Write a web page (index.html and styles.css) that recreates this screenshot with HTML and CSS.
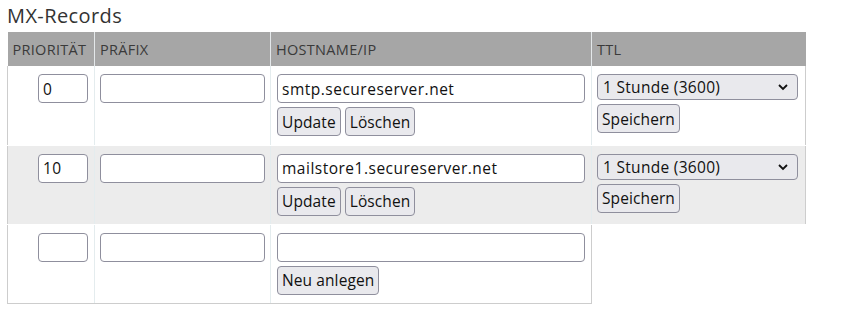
FILE: index.html
```html
<!DOCTYPE html>
<html lang="de">

<head>
  <meta charset="UTF-8" />
  <title>MX-Records</title>
  <link rel="stylesheet" href="styles.css">
</head>

<body>
  <h2 class="title">MX-Records</h2>
  <table class="records">
    <colgroup>
      <col class="col-prio">
      <col class="col-prefix">
      <col class="col-host">
      <col class="col-ttl">
    </colgroup>
    <thead>
      <tr>
        <th>Priorität</th>
        <th>Präfix</th>
        <th>Hostname/IP</th>
        <th class="last">TTL</th>
      </tr>
    </thead>
    <tbody>
      <tr>
        <td class="prio"><input class="field field-prio" type="text" value="0"></td>
        <td><input class="field field-prefix" type="text" value=""></td>
        <td class="host">
          <input class="field field-host" type="text" value="smtp.secureserver.net">
          <div class="actions">
            <button class="btn" type="button">Update</button>
            <button class="btn" type="button">Löschen</button>
          </div>
        </td>
        <td class="last">
          <div class="select">1 Stunde (3600)
            <svg class="chev" width="12" height="8" viewBox="0 0 12 8"><path d="M2 2l4 4 4-4" fill="none" stroke="#111" stroke-width="1.8"/></svg>
          </div>
          <div class="actions">
            <button class="btn" type="button">Speichern</button>
          </div>
        </td>
      </tr>
      <tr class="alt">
        <td class="prio"><input class="field field-prio" type="text" value="10"></td>
        <td><input class="field field-prefix" type="text" value=""></td>
        <td class="host">
          <input class="field field-host" type="text" value="mailstore1.secureserver.net">
          <div class="actions">
            <button class="btn" type="button">Update</button>
            <button class="btn" type="button">Löschen</button>
          </div>
        </td>
        <td class="last">
          <div class="select">1 Stunde (3600)
            <svg class="chev" width="12" height="8" viewBox="0 0 12 8"><path d="M2 2l4 4 4-4" fill="none" stroke="#111" stroke-width="1.8"/></svg>
          </div>
          <div class="actions">
            <button class="btn" type="button">Speichern</button>
          </div>
        </td>
      </tr>
      <tr class="new">
        <td class="prio"><input class="field field-prio" type="text" value=""></td>
        <td><input class="field field-prefix" type="text" value=""></td>
        <td class="host end">
          <input class="field field-host" type="text" value="">
          <div class="actions">
            <button class="btn" type="button">Neu anlegen</button>
          </div>
        </td>
      </tr>
    </tbody>
  </table>
</body>

</html>
```

FILE: styles.css
```css
* {
  box-sizing: border-box;
}

body {
  margin: 0;
  padding: 4px 7px;
  font-family: 'Open Sans', sans-serif;
  color: #222;
  background: #fff;
}

.title {
  margin: 0 0 4px;
  font-size: 20px;
  font-weight: normal;
  letter-spacing: 0.4px;
  color: #333;
  line-height: 24px;
}

table.records {
  border-collapse: collapse;
  table-layout: fixed;
  width: 798px;
}

.col-prio {
  width: 87px;
}

.col-prefix {
  width: 176px;
}

.col-host {
  width: 321px;
}

.col-ttl {
  width: 214px;
}

.records th {
  background: #a6a6a6;
  color: #3a3a3a;
  font-weight: normal;
  font-size: 14.5px;
  letter-spacing: 0.3px;
  text-transform: uppercase;
  text-align: left;
  height: 34px;
  padding: 0 5px;
  border-right: 1px solid #e4e8ea;
  white-space: nowrap;
}

.records th.last {
  border-right: none;
}

.records td {
  vertical-align: top;
  padding: 8px 5px;
  border-right: 1px solid #e4ecee;
  border-bottom: 1px solid #fff;
  height: 79px;
}

.records td:first-child {
  border-left: 1px solid #cdcdcd;
}

.records td.last,
.records td.end {
  border-right: 1px solid #cdcdcd;
}

.records tr.alt td {
  background: #ececec;
}

.records tr.new td {
  border-bottom: 1px solid #cdcdcd;
}

.records td.prio {
  text-align: right;
  padding-right: 6px;
}

.records td.host {
  padding-left: 6px;
}

.field {
  display: block;
  height: 29px;
  border: 1px solid #8f8f9d;
  border-radius: 4px;
  background: #fff;
  font-family: inherit;
  font-size: 15.5px;
  letter-spacing: 0.5px;
  color: #111;
  padding: 0 4px;
  outline: none;
}

.field-prio {
  width: 50px;
  margin-left: auto;
}

.field-prefix {
  width: 165px;
}

.field-host {
  width: 308px;
}

.actions {
  display: flex;
  gap: 4px;
  margin-top: 4px;
}

.btn {
  height: 29px;
  padding: 0 4px;
  border: 1px solid #8f8f9d;
  border-radius: 4px;
  background: #e9e9ed;
  font-family: inherit;
  font-size: 15.5px;
  letter-spacing: 0.1px;
  color: #111;
}

.select {
  display: flex;
  align-items: center;
  justify-content: space-between;
  width: 201px;
  height: 26px;
  padding: 0 8px 0 5px;
  border: 1px solid #8f8f9d;
  border-radius: 4px;
  background: #e9e9ed;
  font-size: 15.5px;
  letter-spacing: 0.3px;
  color: #111;
}
```
